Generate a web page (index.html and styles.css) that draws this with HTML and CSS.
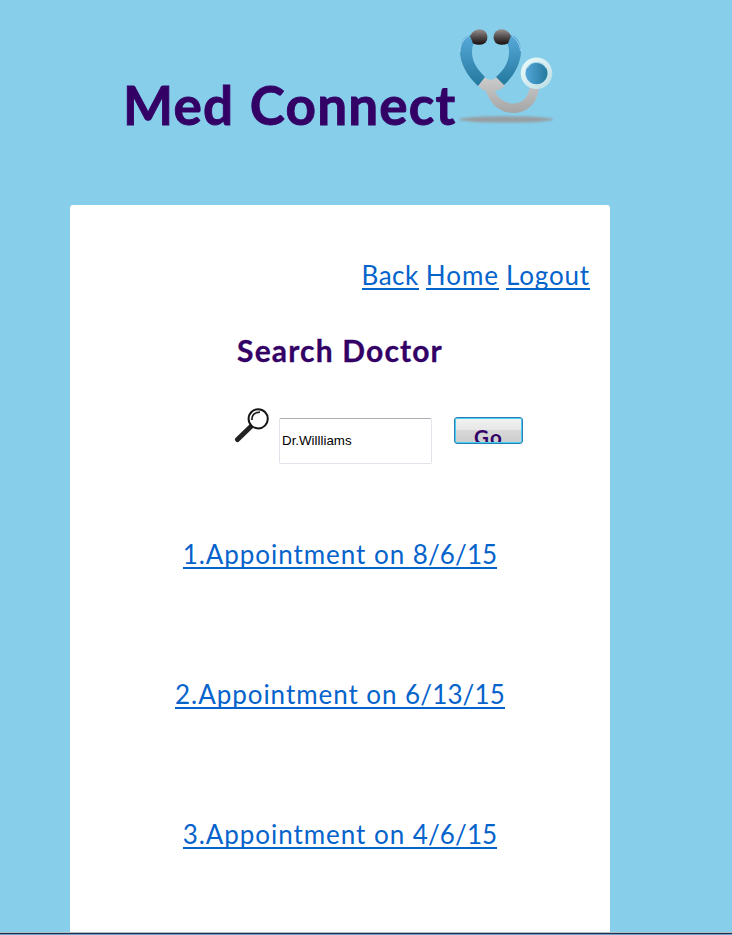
FILE: index.html
```html
<!DOCTYPE html>
<html lang="en">
<head>
<meta charset="utf-8">
<title>Med Connect</title>
<link rel="stylesheet" href="styles.css">
</head>
<body>
<header class="brand">
  <h1 class="brand-name">Med Connect</h1>
  <svg class="brand-logo" viewBox="0 0 110 110" width="110" height="110" aria-hidden="true">
    <defs>
      <linearGradient id="tube" x1="0" y1="0" x2="0" y2="1"><stop offset="0" stop-color="#58a9da"/><stop offset="1" stop-color="#23789c"/></linearGradient>
      <linearGradient id="bud" x1="0" y1="0" x2="0" y2="1"><stop offset="0" stop-color="#999190"/><stop offset=".45" stop-color="#595252"/><stop offset="1" stop-color="#170f0f"/></linearGradient>
      <linearGradient id="disc" x1="0" y1="0" x2="1" y2="0"><stop offset="0" stop-color="#53a6d8"/><stop offset="1" stop-color="#24799e"/></linearGradient>
      <linearGradient id="metal" x1="0" y1="0" x2="0" y2="1"><stop offset="0" stop-color="#ccc"/><stop offset="1" stop-color="#a6a5a5"/></linearGradient>
      <linearGradient id="rim" x1="0" y1="0" x2="1" y2="1"><stop offset="0" stop-color="#f0fbfb"/><stop offset="1" stop-color="#b9dde4"/></linearGradient>
      <filter id="soft" x="-10%" y="-50%" width="120%" height="200%"><feGaussianBlur stdDeviation=".8"/></filter>
    </defs>
    <ellipse cx="56" cy="99.4" rx="47.5" ry="3.2" fill="#999" opacity=".9" filter="url(#soft)"/>
    <path d="M34 57Q41 63 47 57L55 65Q52 70 45 71C48 78 54 83 63 83.500C72 83.500 78 78 80 67L89 68C87 84 77 93 63 93C50 93 40 84 36 71Q31 70 28 65Z" fill="url(#metal)"/>
    <path d="M20 15C14 16 10 23 10 31C10 43 17 56 28 66L35 57C28 50 22 42 22 32Q22 26 24 23Z" fill="url(#tube)"/>
    <path d="M61 15C67 16 71 23 71 31C71 43 64 56 54 65L46 57C54 50 59 42 59 32Q59 26 57 23Z" fill="url(#tube)"/>
    <path d="M19 16C13 19 10 25 10 32M62 16C67 20 70 24 70.500 31" fill="none" stroke="#c4ebfa" stroke-width=".8" opacity=".8"/>
    <path d="M20 16C23 10 28 8 33 10C37 12 38 16 37 20C35 25 29 26 23 23.500Z" fill="url(#bud)"/>
    <path d="M61 16C58 10 53 8 48 10C44 12 43 16 44 20C46 25 52 26 58 23.500Z" fill="url(#bud)"/>
    <circle cx="86.500" cy="53.300" r="15.800" fill="url(#rim)"/>
    <circle cx="86.500" cy="53.300" r="11" fill="url(#disc)"/>
    <path d="M77.500 48C80 42.500 86 41 92 44Q95 45.500 96 48" fill="none" stroke="#bce9f8" stroke-width=".8"/>
  </svg>
</header>
<main class="panel">
  <nav class="nav">
    <a class="link back" href="#">Back</a>
    <a class="link home" href="#">Home</a>
    <a class="link logout" href="#">Logout</a>
  </nav>
  <h2 class="heading">Search Doctor</h2>
  <form class="search">
    <svg class="search-icon" viewBox="0 0 36 36" width="36" height="36" aria-hidden="true">
      <path d="M3.500 32.500L18 18.500" stroke="#222" stroke-width="5" stroke-linecap="round"/>
      <path d="M16 20L20 16" stroke="#222" stroke-width="2.500"/>
      <circle cx="24.200" cy="11.800" r="9.600" fill="#fff" stroke="#151515" stroke-width="2"/>
      <path d="M17.800 13C17.800 8 20.500 5.200 26 5.200" fill="none" stroke="#222" stroke-width="1.800"/>
    </svg>
    <input class="field" type="text" value="Dr.Willliams" aria-label="Doctor">
    <button class="go" type="button"><span>Go</span></button>
  </form>
  <div class="appointments">
    <a class="link visit" href="#">1.Appointment on <span class="date">8/6/15</span></a>
    <a class="link visit" href="#">2.Appointment on <span class="date">6/13/15</span></a>
    <a class="link visit" href="#">3.Appointment on <span class="date">4/6/15</span></a>
  </div>
</main>
<footer class="edge"></footer>
</body>
</html>
```
FILE: styles.css
```css
* { box-sizing: border-box; }
body { margin: 0; height: 935px; overflow: hidden; display: flex; flex-direction: column; background: #87ceeb; font-family: Lato, Carlito, Calibri, sans-serif; color: #306; }
.brand { height: 205px; flex: none; display: flex; padding: 20px 0 0 123px; }
.brand-name { margin: 53px 0 0; width: 327px; font-size: 53px; line-height: 64px; font-weight: 700; letter-spacing: 1.200px; word-spacing: 1.500px; -webkit-text-stroke: .9px #306; white-space: nowrap; }
.brand-logo { flex: none; }
.panel { width: 540px; margin-left: 70px; flex: 1; background: #fff; border-radius: 3px 3px 0 0; display: flex; flex-direction: column; }
.nav { display: flex; justify-content: flex-end; gap: 7px; padding: 55px 20px 0 0; }
.link { display: block; height: 30px; overflow: hidden; border-bottom: 2px solid #0563cc; color: #0563cc; font-size: 26px; line-height: 30px; text-decoration: none; white-space: nowrap; }
.back { letter-spacing: .5px; }
.home { letter-spacing: 1px; }
.logout { letter-spacing: .83px; }
.visit { letter-spacing: .95px; }
.date { letter-spacing: .13px; }
.heading { margin: 40px 0 1px; font-size: 30px; line-height: 40px; font-weight: 700; letter-spacing: 1.150px; -webkit-text-stroke: .3px #306; text-align: center; }
.search { display: flex; align-items: flex-start; margin: 36px 0 0 164px; height: 57px; }
.search-icon { flex: none; }
.field { width: 153px; height: 46px; margin: 11px 0 0 9px; padding: 0 2px 2px; border: 1px solid #e2e3ea; border-top-color: #abadb3; border-radius: 2px; background: #fff; color: #000; font: 13.333px "Liberation Sans", Arial, sans-serif; outline: 0; }
.go { width: 69px; height: 27px; margin: 10px 0 0 22px; padding: 0; border: 1px solid #2c7fb5; border-radius: 3px; background: linear-gradient(#f2f2f2, #e7e7e7 48%, #d8d8d8 50%, #cdcdcd); box-shadow: inset 0 0 0 1px #45cdf3; color: #306; font: 700 20.500px/24px Lato, sans-serif; letter-spacing: 1.200px; overflow: hidden; }
.go span { display: block; height: 23px; padding-top: 6px; overflow: hidden; }
.appointments { display: flex; flex-direction: column; align-items: center; gap: 110px; margin-top: 75px; }
.edge { height: 3px; flex: none; border-top: 1px solid #b8bcc2; border-bottom: 1px solid #6f9fd0; background: #1b2f4f; }
```
